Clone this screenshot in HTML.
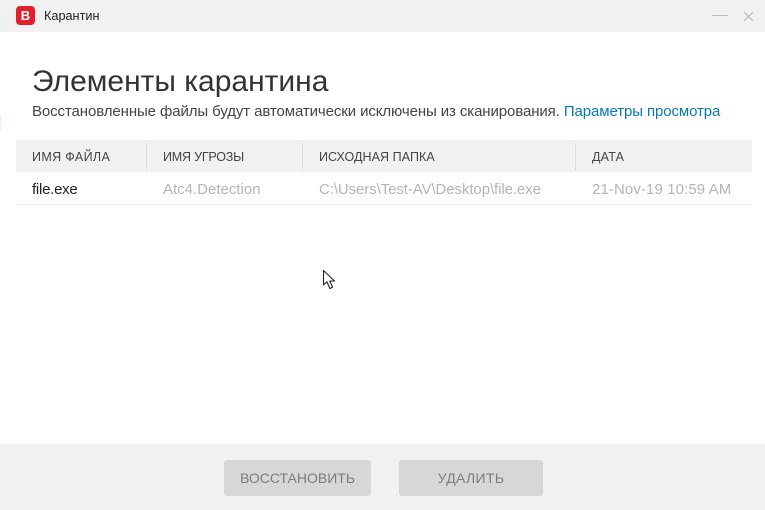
<!DOCTYPE html>
<html lang="ru"><head><meta charset="utf-8"><title>Карантин</title>
<style>
html,body{margin:0;padding:0;background:#fff}
body{position:relative;width:765px;height:510px;overflow:hidden;font-family:"Liberation Sans",sans-serif;color:#333}
.a{position:absolute;white-space:nowrap}
.th{top:149px;font-size:12.5px;line-height:16px;color:#444}
.td{top:182px;font-size:15px;line-height:16px;color:#b4b4b4}
.sep{top:143px;width:1px;height:27px;background:#dcdcdc}
.btn{top:460px;height:36px;background:#d7d7d7;border-radius:3px;color:#7d7d7d;font-size:14px;line-height:37px;text-align:center}
</style></head><body>
<div class="a" style="left:0;top:0;width:765px;height:32px;background:#f1f1f1"></div>
<div class="a" style="left:0;top:18px;width:1px;height:14px;background:#d8fbe8"></div>
<div class="a" style="left:0;top:115px;width:1px;height:15px;background:#d8fbe8"></div>
<div class="a" style="left:16px;top:6px;width:19px;height:19px;background:#e2202c;border-radius:4px;color:#fff;font-weight:bold;font-size:13px;line-height:19px;text-align:center">B</div>
<div class="a" style="left:44px;top:9px;font-size:12.7px;line-height:15px;color:#222">Карантин</div>
<div class="a" style="left:712px;top:15px;width:16px;height:1px;background:#bbb"></div>
<svg class="a" style="left:743px;top:11px" width="11" height="11" viewBox="0 0 11 11"><path d="M1 1L10 10M10 1L1 10" stroke="#bbb" stroke-width="1.2" fill="none"/></svg>
<div class="a" style="left:32px;top:64px;font-size:30px;line-height:36px;color:#333">Элементы карантина</div>
<div class="a" style="left:32px;top:103px;font-size:15px;line-height:17px;color:#444;letter-spacing:-.1px">Восстановленные файлы будут автоматически исключены из сканирования. <span style="color:#0a78b4">Параметры просмотра</span></div>
<div class="a" style="left:16px;top:140px;width:736px;height:32px;background:#f1f1f1"></div>
<div class="a sep" style="left:146px"></div><div class="a sep" style="left:302px"></div><div class="a sep" style="left:575px"></div>
<div class="a th" style="left:32px;letter-spacing:.35px">ИМЯ ФАЙЛА</div>
<div class="a th" style="left:163px;letter-spacing:-.2px">ИМЯ УГРОЗЫ</div>
<div class="a th" style="left:319px;letter-spacing:.07px">ИСХОДНАЯ ПАПКА</div>
<div class="a th" style="left:592px;letter-spacing:.2px">ДАТА</div>
<div class="a td" style="left:32px;color:#222;letter-spacing:-.25px">file.exe</div>
<div class="a td" style="left:163px">Atc4.Detection</div>
<div class="a td" style="left:319px;letter-spacing:-.09px">C:\Users\Test-AV\Desktop\file.exe</div>
<div class="a td" style="left:592px;letter-spacing:.1px">21-Nov-19 10:59 AM</div>
<div class="a" style="left:16px;top:204px;width:736px;height:1px;background:#f0f0f0"></div>
<svg class="a" style="left:322px;top:269px" width="14" height="22" viewBox="0 0 14 22"><path d="M1.5 1.5V16L5 12.8L7.8 19.5L10.6 18.3L7.8 12H12.5Z" fill="#fff" stroke="#222" stroke-width="1.1" stroke-linejoin="round"/></svg>
<div class="a" style="left:0;top:444px;width:765px;height:66px;background:#f1f1f1"></div>
<div class="a btn" style="left:224px;width:147px">ВОССТАНОВИТЬ</div>
<div class="a btn" style="left:399px;width:144px;letter-spacing:.35px">УДАЛИТЬ</div>
</body></html>
